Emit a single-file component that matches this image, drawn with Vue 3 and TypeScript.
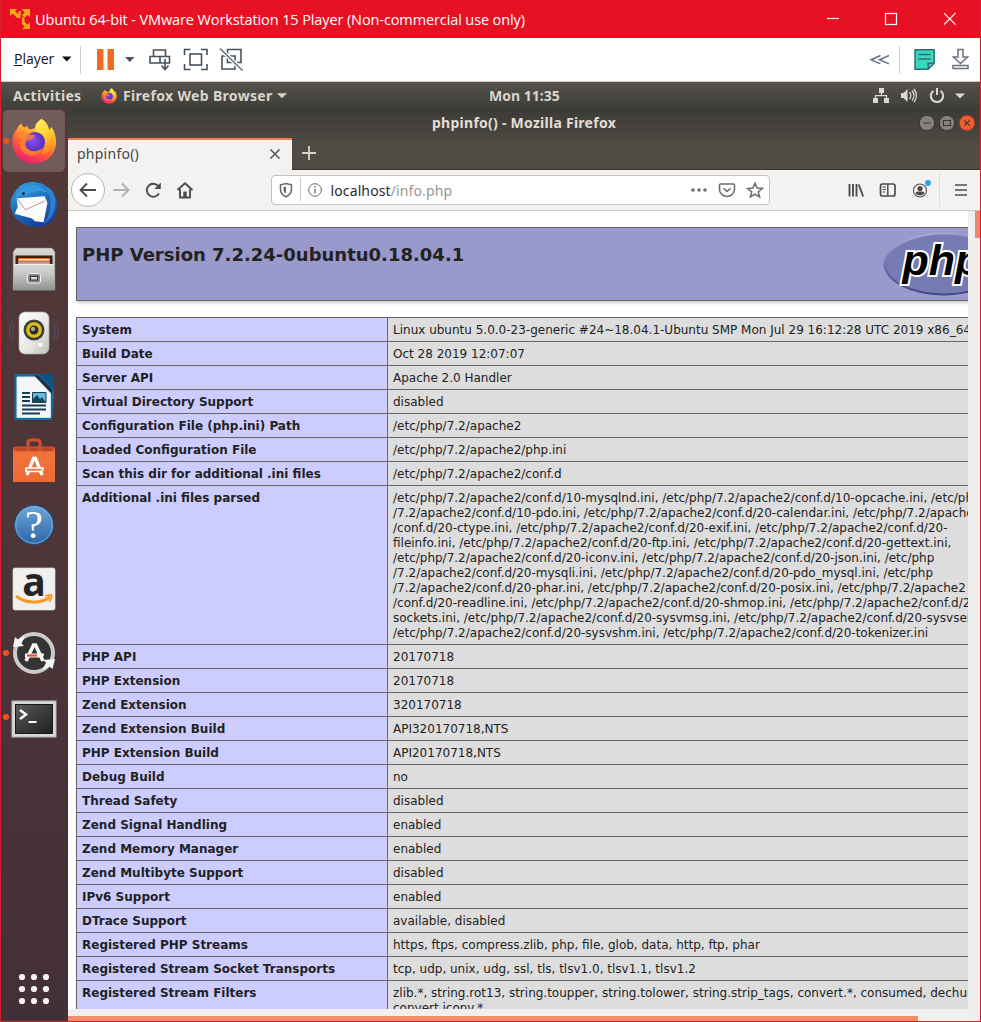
<script setup lang="ts">
interface InfoRow {
  label: string
  lines: string[]
}

const row = (label: string, ...lines: string[]): InfoRow => ({ label, lines })

const rows: InfoRow[] = [
  row('System', 'Linux ubuntu 5.0.0-23-generic #24~18.04.1-Ubuntu SMP Mon Jul 29 16:12:28 UTC 2019 x86_64'),
  row('Build Date', 'Oct 28 2019 12:07:07'),
  row('Server API', 'Apache 2.0 Handler'),
  row('Virtual Directory Support', 'disabled'),
  row('Configuration File (php.ini) Path', '/etc/php/7.2/apache2'),
  row('Loaded Configuration File', '/etc/php/7.2/apache2/php.ini'),
  row('Scan this dir for additional .ini files', '/etc/php/7.2/apache2/conf.d'),
  row(
    'Additional .ini files parsed',
    '/etc/php/7.2/apache2/conf.d/10-mysqlnd.ini, /etc/php/7.2/apache2/conf.d/10-opcache.ini, /etc/php',
    '/7.2/apache2/conf.d/10-pdo.ini, /etc/php/7.2/apache2/conf.d/20-calendar.ini, /etc/php/7.2/apache2',
    '/conf.d/20-ctype.ini, /etc/php/7.2/apache2/conf.d/20-exif.ini, /etc/php/7.2/apache2/conf.d/20-',
    'fileinfo.ini, /etc/php/7.2/apache2/conf.d/20-ftp.ini, /etc/php/7.2/apache2/conf.d/20-gettext.ini,',
    '/etc/php/7.2/apache2/conf.d/20-iconv.ini, /etc/php/7.2/apache2/conf.d/20-json.ini, /etc/php',
    '/7.2/apache2/conf.d/20-mysqli.ini, /etc/php/7.2/apache2/conf.d/20-pdo_mysql.ini, /etc/php',
    '/7.2/apache2/conf.d/20-phar.ini, /etc/php/7.2/apache2/conf.d/20-posix.ini, /etc/php/7.2/apache2',
    '/conf.d/20-readline.ini, /etc/php/7.2/apache2/conf.d/20-shmop.ini, /etc/php/7.2/apache2/conf.d/20-',
    'sockets.ini, /etc/php/7.2/apache2/conf.d/20-sysvmsg.ini, /etc/php/7.2/apache2/conf.d/20-sysvsem.ini,',
    '/etc/php/7.2/apache2/conf.d/20-sysvshm.ini, /etc/php/7.2/apache2/conf.d/20-tokenizer.ini'
  ),
  row('PHP API', '20170718'),
  row('PHP Extension', '20170718'),
  row('Zend Extension', '320170718'),
  row('Zend Extension Build', 'API320170718,NTS'),
  row('PHP Extension Build', 'API20170718,NTS'),
  row('Debug Build', 'no'),
  row('Thread Safety', 'disabled'),
  row('Zend Signal Handling', 'enabled'),
  row('Zend Memory Manager', 'enabled'),
  row('Zend Multibyte Support', 'disabled'),
  row('IPv6 Support', 'enabled'),
  row('DTrace Support', 'available, disabled'),
  row('Registered PHP Streams', 'https, ftps, compress.zlib, php, file, glob, data, http, ftp, phar'),
  row('Registered Stream Socket Transports', 'tcp, udp, unix, udg, ssl, tls, tlsv1.0, tlsv1.1, tlsv1.2'),
  row(
    'Registered Stream Filters',
    'zlib.*, string.rot13, string.toupper, string.tolower, string.strip_tags, convert.*, consumed, dechunk,',
    'convert.iconv.*'
  )
]

const gridDots = [22, 34, 46]
</script>

<template>
  <div class="vm">
    <svg class="defs" width="0" height="0">
      <defs>
        <linearGradient id="ffBody" x1="0.75" y1="0" x2="0.3" y2="1">
          <stop offset="0" stop-color="#fff04a" />
          <stop offset="0.35" stop-color="#ffb02a" />
          <stop offset="0.65" stop-color="#ff5a38" />
          <stop offset="1" stop-color="#e81c78" />
        </linearGradient>
        <linearGradient id="ffTail" x1="0" y1="0" x2="0.4" y2="1">
          <stop offset="0" stop-color="#fff36a" />
          <stop offset="0.6" stop-color="#ffd02e" />
          <stop offset="1" stop-color="#ff8a2c" />
        </linearGradient>
        <radialGradient id="ffGlobe" cx="0.4" cy="0.4" r="0.7">
          <stop offset="0" stop-color="#8a50f0" />
          <stop offset="1" stop-color="#4c2bb0" />
        </radialGradient>
        <symbol id="firefox" viewBox="0 0 48 48">
          <path d="M6 12 C7 9 9 7 11 5.500 C11.200 8 12.500 9 14 10 L17 8 C17.200 10 18 11.500 20 12 C22 11 26 10 29 10.500 C29 5 32 2 31.500 .8 C37 4 39 9 40 13 L42.500 9.500 C45 14 47 19 47 25 C47 38 37 47.500 24 47.500 C11 47.500 1.500 38 1.500 25 C1.500 20 3 15 6 12 Z" fill="url(#ffBody)" />
          <path d="M31.500 .8 C37 4 39 9 40 13 L41.500 10.500 C45 16 46 22 44 28 C42 35 36 38 31 37 C38 32 36 24 31 19 C27 15 24 12 25.500 8 C27 4 30 3 31.500 .8 Z" fill="url(#ffTail)" />
          <circle cx="25" cy="25" r="10.500" fill="url(#ffGlobe)" />
          <path d="M6 17 C10 13 16 13 19 17 L25 18 C25 21 21 23 18 23.500 C15 25 14 28 16 31 C19 35 26 36 32 32 C30 40 18 42 12 35 C8 30 9 25 12 22 C9 21 7 20 6 17 Z" fill="#ff8a2d" opacity="0.75" />
        </symbol>
        <linearGradient id="tbBlue" x1="0.2" y1="0" x2="0.7" y2="1">
          <stop offset="0" stop-color="#2f9fe0" />
          <stop offset="0.5" stop-color="#1d6cc0" />
          <stop offset="1" stop-color="#173b95" />
        </linearGradient>
        <linearGradient id="cabinet" x1="0" y1="0" x2="0" y2="1">
          <stop offset="0" stop-color="#d8d8d6" />
          <stop offset="0.4" stop-color="#c4c4c2" />
          <stop offset="1" stop-color="#8f8f8d" />
        </linearGradient>
        <linearGradient id="speaker" x1="0" y1="0" x2="1" y2="1">
          <stop offset="0" stop-color="#ffffff" />
          <stop offset="0.6" stop-color="#e6e6e4" />
          <stop offset="1" stop-color="#bdbdbb" />
        </linearGradient>
        <linearGradient id="bag" x1="0" y1="0" x2="0" y2="1">
          <stop offset="0" stop-color="#e0592d" />
          <stop offset="0.2" stop-color="#f0743c" />
          <stop offset="1" stop-color="#ec6a35" />
        </linearGradient>
        <linearGradient id="help" x1="0" y1="0" x2="0" y2="1">
          <stop offset="0" stop-color="#6fa6d8" />
          <stop offset="1" stop-color="#2a66a8" />
        </linearGradient>
        <linearGradient id="term" x1="0" y1="0" x2="1" y2="1">
          <stop offset="0" stop-color="#5b5d5a" />
          <stop offset="0.5" stop-color="#3a3c3a" />
          <stop offset="1" stop-color="#20201f" />
        </linearGradient>
        <linearGradient id="phpRim" x1="0" y1="0" x2="0.3" y2="1">
          <stop offset="0" stop-color="#b9bce4" />
          <stop offset="0.5" stop-color="#6a6fae" />
          <stop offset="1" stop-color="#40458a" />
        </linearGradient>
      </defs>
    </svg>

    <header class="titlebar">
      <svg class="vm-logo" width="22" height="22" viewBox="0 0 22 22" fill="#f9a51a">
        <path d="M1 1h7L6 3.200l3.500 3.300h2V10H8.200L3.500 5.500 1 8z" />
        <path d="M12.500 1H21v8.500l-2.500-2.700-3 3L13 7.300l2.800-2.800z" />
        <path d="M9.500 3h2.300v4H9.500zM13 9.500h2.500v4.200l3 3L21 14v7h-8l2.700-2.300-2.700-2.700z" />
      </svg>
      <span class="window-name">Ubuntu 64-bit - VMware Workstation 15 Player (Non-commercial use only)</span>
      <svg class="window-buttons" width="140" height="38" viewBox="0 0 140 38" fill="none" stroke="#fff" stroke-width="1.200">
        <path d="M5 18.500h12" />
        <rect x="63.500" y="13.500" width="11" height="11" />
        <path d="M122 13.200l11.500 11.500M133.500 13.200L122 24.700" />
      </svg>
    </header>

    <div class="toolbar">
      <span class="player"><u>P</u>layer</span>
      <svg class="tool-left" width="182" height="43" viewBox="0 0 182 43" fill="none" stroke="#46525e" stroke-width="1.600">
        <path d="M0 18.500h9.500L4.800 23.500z" fill="#111" stroke="none" />
        <path d="M18.500 8v28" stroke="#cfcfcf" stroke-width="1" />
        <path d="M35 11h6.500v21H35zM45.500 11H52v21h-6.500z" fill="#f26a21" stroke="none" />
        <path d="M63 19h9.500l-4.700 5z" fill="#46525e" stroke="none" />
        <path d="M91.500 12h12v6.500h-12zM88 18.500h10V25H88zM98 18.500h9.500V25H98zM103 21v10M99.500 27.500l3.500 4 3.500-4" />
        <path d="M122.500 17v-5.500h6M139 11.500h6V17M145 26v5.500h-6M128.500 31.500h-6V26" />
        <rect x="128" y="16" width="11.500" height="11" />
        <path d="M165.500 24.500V11.500H179V24.500zM160 18h5.500M160 17.500v13.500h13v-6.500M165.500 18h7.500v7" />
        <path d="M158 10.500l22.500 22" stroke="#fff" stroke-width="4" />
        <path d="M158 10.500l22.500 22" stroke="#69737c" />
      </svg>
      <svg class="tool-right" width="106" height="43" viewBox="0 0 106 43" fill="none" stroke="#67727e" stroke-width="1.500">
        <path d="M10.500 17.500L1 21.700l9.500 4.200M19 17.500L9.500 21.700l9.500 4.200M1 21.700h3M9 21.700h3" />
        <path d="M29.500 8v27.500" stroke="#cfcfcf" stroke-width="1" />
        <path d="M45 11.800h19.200v13.500l-6 6H45z" fill="#3ad6bd" stroke="#326d74" />
        <path d="M58.200 31.300v-6h6M48.500 16.500h12M48.500 21h12" stroke="#326d74" />
        <path d="M88 11.500h5v7.500h4.500l-7 6.500-7-6.500H88zM83 27.500h15v3H83z" />
      </svg>
    </div>

    <div class="desktop">
      <div class="topbar">
        <span class="activities">Activities</span>
        <svg class="topbar-ff" width="16" height="16"><use href="#firefox" /></svg>
        <span class="app-menu">Firefox Web Browser</span>
        <svg class="arrow" width="10" height="6" viewBox="0 0 10 6"><path d="M0 .3h10L5 5.300z" fill="#d5d2cc" /></svg>
        <span class="clock">Mon 11:35</span>
        <svg class="status" width="94" height="20" viewBox="0 0 94 20" fill="none" stroke="#dcd9d4" stroke-width="1.300">
          <path d="M7 2h5v5H7zM1 12h5v5H1zM12 12h5v5h-5z" fill="#dcd9d4" stroke="none" />
          <path d="M9.500 6v4M3.500 13V9.700h11V13" stroke-width="1.200" />
          <path d="M29 7h2.500l4-4v13l-4-4H29z" fill="#dcd9d4" stroke="none" />
          <path d="M37.500 6c1.500 2 1.500 5 0 7M40 4.500c2.500 3 2.500 7 0 10M42 3c3 4 3 9 0 13" />
          <path d="M61.500 4.800a6.200 6.200 0 1 0 7 0M65 2v7" stroke-width="2" />
          <path d="M83 7.500h10l-5 5z" fill="#dcd9d4" stroke="none" />
        </svg>
      </div>

      <div class="workspace">
        <nav class="dock">
          <div class="launcher running active">
            <svg width="46" height="46"><use href="#firefox" /></svg>
          </div>
          <div class="launcher">
            <svg width="50" height="50" viewBox="0 0 52 52">
              <path d="M4 16C8 8 13 4 18 3C34 -1 49 10 50 25C51 37 44 48 32 49C20 50 6 44 3 32C1 26 1 21 4 16Z" fill="url(#tbBlue)" />
              <path d="M11 12C17 3 32 3 40 13C32 10 24 11 18 16C14 14 10 16 6 20C7 16 8 14 11 12Z" fill="#3598dc" />
              <path d="M36 7C45 15 46 32 36 46C48 39 53 20 43 9Z" fill="#3794dc" opacity="0.6" />
              <path d="M8 19L37 17L40 24L36 44L27 43L24 40L6 35L9 28Z" fill="#fbfbfb" />
              <path d="M8 18.500L17 31L37 22" fill="none" stroke="#999" stroke-width="1" />
              <circle cx="15" cy="14" r="1.300" fill="#111" />
            </svg>
          </div>
          <div class="launcher">
            <svg width="48" height="48" viewBox="0 0 48 48">
              <path d="M6 3h36l3 4v37H3V7z" fill="url(#cabinet)" stroke="#777" stroke-width=".5" />
              <path d="M5.500 10.500h37V20h-37z" fill="#35201a" />
              <path d="M8 13h32v7H8z" fill="#e86b26" />
              <path d="M9 14.800h30" stroke="#ffe6bd" stroke-width="1.500" />
              <path d="M8 17.300h32v3H8z" fill="#c4ab8d" />
              <path d="M4 19.500h40l1 26H3z" fill="url(#cabinet)" />
              <path d="M4 19.500h40" stroke="#eee" />
              <rect x="17.500" y="28.500" width="13" height="9.500" rx="2" fill="#858583" stroke="#f3f3f1" />
              <rect x="20.500" y="31.500" width="7" height="3.500" fill="#ddd" stroke="#333" />
            </svg>
          </div>
          <div class="launcher">
            <svg width="48" height="48" viewBox="0 0 48 48">
              <path d="M5 13c-3 6-3 12 0 18M43 13c3 6 3 12 0 18M2 12c-3 6-3 14 0 20M46 12c3 6 3 14 0 20" fill="none" stroke="#50669a" stroke-width="1.500" opacity=".4" />
              <rect x="9" y="3" width="30" height="42" rx="6" fill="url(#speaker)" stroke="#aaa" stroke-width=".7" />
              <circle cx="24" cy="21" r="10.500" fill="#42494b" />
              <circle cx="24" cy="21" r="8.500" fill="#d6bd25" stroke="#26201a" />
              <circle cx="24" cy="21" r="4.500" fill="#2d2b23" />
              <circle cx="23" cy="20" r="2.200" fill="#a9a58e" />
              <rect x="27" y="33" width="6" height="5.500" rx="1.500" fill="#f5f5ee" stroke="#b7b7a7" stroke-width=".6" />
            </svg>
          </div>
          <div class="launcher">
            <svg width="48" height="48" viewBox="0 0 48 48">
              <path d="M4.500 1H44v23l-2 23H4.500z" fill="#116ca6" />
              <path d="M29 1h15v16z" fill="#0d527f" />
              <path d="M7 4h18l15.500 16v24.500H7z" fill="#f5f6f7" stroke="#d6e3ec" />
              <path d="M24 2l18 19v-5L28 2z" fill="#262f38" />
              <path d="M12 20h8M12 24h8M12 28h8M12 32.500h24M12 36.500h24M12 40.500h18" stroke="#183d57" stroke-width="1.800" />
              <path d="M22.500 19.500h13.500v10H22.500z" fill="#69b9df" stroke="#183d57" />
              <path d="M23 29v-3l4-4 3 4 2-2 3.500 5z" fill="#16465b" />
            </svg>
          </div>
          <div class="launcher">
            <svg width="48" height="48" viewBox="0 0 48 48">
              <path d="M3 10h42v35H3z" fill="url(#bag)" />
              <path d="M3 10h42l-2 4H5z" fill="#bd4725" />
              <path d="M5 14V10h38v4" fill="none" stroke="#d65630" />
              <path d="M18 14V6q0-3 3-3h6q3 0 3 3v8" fill="none" stroke="#d34f2e" stroke-width="3" />
              <path d="M17 38l6.500-16.500h2L32 38" fill="none" stroke="#fff" stroke-width="3.400" />
              <path d="M16 31h17q0 3.500-2.500 3.500H16z" fill="#ef7b48" stroke="#fff" stroke-width="1.700" />
            </svg>
          </div>
          <div class="launcher">
            <svg width="48" height="48" viewBox="0 0 48 48">
              <circle cx="24" cy="24" r="19.500" fill="url(#help)" stroke="#214f80" />
              <circle cx="24" cy="24" r="18.300" fill="none" stroke="#88b6de" stroke-width=".8" />
              <text x="24" y="37" text-anchor="middle" class="help-mark">?</text>
            </svg>
          </div>
          <div class="launcher">
            <svg width="48" height="48" viewBox="0 0 48 48">
              <rect x="3" y="3" width="42" height="42" rx="2" fill="#f0f0f0" stroke="#ddd" stroke-width=".7" />
              <text x="24" y="30.500" text-anchor="middle" class="amazon-mark">a</text>
              <path d="M6 31c10 8 25 8 34 1" fill="none" stroke="#f79a1e" stroke-width="3" />
              <path d="M35 31q7-2 7 0t-3 6" fill="none" stroke="#f79a1e" stroke-width="1.800" />
            </svg>
          </div>
          <div class="launcher running">
            <svg width="48" height="48" viewBox="0 0 48 48">
              <circle cx="24" cy="24" r="19" fill="#333433" stroke="#cbcbc9" stroke-width="4" />
              <path d="M3 18L5 8l3 2.500 7-3.500-3.500 7.500L14 17z" fill="#f4f4f4" />
              <path d="M45 30l-2.500 10-3-2.500-7 3.500 3.500-7.500L33 31z" fill="#f4f4f4" />
              <path d="M16 32l7.500-16h2L33 32" fill="none" stroke="#f5f5f3" stroke-width="3.600" />
              <path d="M15 24.500h19q0 4-3 4H15z" fill="#f5f5f3" />
              <path d="M17 26.500h10" stroke="#e6542b" stroke-width="2.200" />
            </svg>
          </div>
          <div class="launcher running terminal">
            <svg width="48" height="48" viewBox="0 0 48 48">
              <rect x="2" y="6" width="44" height="36" fill="#d7d8d5" stroke="#b6b6b3" />
              <rect x="5.500" y="9.500" width="37" height="29" fill="url(#term)" stroke="#191919" />
              <path d="M10 15l6 4.500-6 4.500" fill="none" stroke="#fff" stroke-width="2.500" />
              <path d="M18.500 27h8" stroke="#fff" stroke-width="2" />
            </svg>
          </div>
          <svg class="show-apps" width="67" height="66" viewBox="1 956 67 66" fill="#f7f3f2">
            <template v-for="cx in gridDots" :key="cx">
              <circle v-for="cy in gridDots" :key="cy" :cx="cx" :cy="cy + 956" r="3.100" />
            </template>
          </svg>
        </nav>

        <section class="browser">
          <div class="browser-head">
            <span class="page-title">phpinfo() - Mozilla Firefox</span>
            <svg class="head-buttons" width="60" height="20" viewBox="0 0 60 20">
              <circle cx="10" cy="10" r="7.700" fill="#85827b" stroke="#34332e" />
              <circle cx="30" cy="10" r="7.700" fill="#85827b" stroke="#34332e" />
              <circle cx="50" cy="10" r="7.800" fill="#ee5e30" stroke="#8f3b22" />
              <path d="M6.500 10h7M26.500 7.500h7v5h-7zM47.300 7.300l5.400 5.400M52.700 7.300l-5.400 5.400" fill="none" stroke="#3a332d" stroke-width="1.100" />
            </svg>
            <div class="tab">
              <span>phpinfo()</span>
              <svg width="12" height="12" viewBox="0 0 12 12" fill="none" stroke="#555" stroke-width="1.600"><path d="M1.500 1.500l9 9M10.500 1.500l-9 9" /></svg>
            </div>
            <svg class="new-tab" width="14" height="14" viewBox="0 0 14 14" fill="none" stroke="#d7d3ca" stroke-width="1.800"><path d="M7 0v14M0 7h14" /></svg>
          </div>

          <div class="navbar">
            <svg class="nav-icons" width="130" height="40" viewBox="0 0 130 40" fill="none" stroke="#4c4c4c" stroke-width="1.900">
              <circle cx="20" cy="20" r="16.500" fill="#fff" stroke="#b8b5b2" stroke-width="1" />
              <path d="M28 20H13M19 13.500L12.500 20l6.500 6.500" />
              <path d="M45.500 20H60M54 13.500l6.500 6.500-6.500 6.500" stroke="#b4b2b0" />
              <path d="M91 23.500a6.500 6.500 0 1 1-.8-7.500" />
              <path d="M92.800 12.500v6.500h-6.500z" fill="#4c4c4c" stroke="none" />
              <path d="M109.500 20l7.500-6.800 7.500 6.800M112 19v8.500h10V19" stroke-linejoin="round" />
              <path d="M115.300 21.500h3.400V27h-3.400z" fill="#4c4c4c" stroke="none" />
            </svg>
            <div class="urlbar">
              <svg width="56" height="28" viewBox="0 0 56 28" fill="none" stroke="#686868" stroke-width="1.500">
                <path d="M14 7.500l5.500 1.300v4.500c0 4-2.500 6.200-5.500 7.500-3-1.300-5.500-3.500-5.500-7.500V8.800z" />
                <path d="M14 10.500v7c-1.800-1-2.500-2.500-2.500-4.500v-1.800z" fill="#686868" stroke="none" />
                <path d="M28.500 2v23" stroke="#c8c8c8" stroke-width="1" />
                <circle cx="43" cy="14" r="6.300" stroke-width="1" />
                <path d="M43 13v4.500M43 10v1.500" stroke-width="1.300" />
              </svg>
              <span class="host">localhost</span><span class="path">/info.php</span>
              <svg class="url-actions" width="76" height="28" viewBox="0 0 76 28" fill="none" stroke="#6f6f6f" stroke-width="1.600">
                <g fill="#6f6f6f" stroke="none"><circle cx="3" cy="14" r="1.800" /><circle cx="9" cy="14" r="1.800" /><circle cx="15" cy="14" r="1.800" /></g>
                <path d="M30.500 8h13q1 0 1 1v4.500a7 6.500 0 0 1-15 0V9q0-1 1-1zM33.500 12.300l3.500 3.200 3.500-3.200" />
                <path d="M65 7.200l2.100 4.800 5.200.5-4 3.400 1.200 5-4.500-2.700-4.500 2.700 1.200-5-4-3.400 5.200-.5z" />
              </svg>
            </div>
            <svg class="nav-tools" width="132" height="40" viewBox="0 0 132 40" fill="none" stroke="#4d4d4d" stroke-width="1.700">
              <path d="M8.500 14v12.500M12 14v12.500M15.500 14v12.500M17.700 14.500l4.500 12" stroke-width="1.900" />
              <rect x="39.500" y="14" width="14.500" height="12" rx="2" />
              <path d="M46.800 14v12" stroke-width="1.500" /><path d="M41.500 17h3.500M41.500 19.500h3.500M41.500 22h2.500" stroke-width="1" />
              <circle cx="79" cy="20.500" r="6.500" stroke-width="1.100" />
              <circle cx="79" cy="18.500" r="2.600" fill="#4d4d4d" stroke="none" />
              <path d="M74.500 23.500q0-2 2.500-2h4q2.500 0 2.500 2q-4.500 4-9 0z" fill="#4d4d4d" stroke="none" />
              <circle cx="87" cy="13" r="3" fill="#20a5ef" stroke="none" />
              <path d="M98.500 4v33" stroke="#dedbd8" stroke-width="1" />
              <path d="M114 15h12M114 20h12M114 25h12" />
            </svg>
          </div>

          <div class="viewport">
            <main class="page">
              <div class="banner">
                <h1>PHP Version 7.2.24-0ubuntu0.18.04.1</h1>
                <svg class="php-logo" width="121" height="66" viewBox="0 0 121 66">
                  <ellipse cx="60.500" cy="32" rx="60" ry="31.500" fill="url(#phpRim)" />
                  <ellipse cx="61" cy="32" rx="58" ry="29.500" fill="#777bb3" />
                  <text x="19.500" y="43" class="php-word">php</text>
                </svg>
              </div>
              <table>
                <colgroup><col class="key" /><col class="val" /></colgroup>
                <tbody>
                  <tr v-for="item in rows" :key="item.label">
                    <th>{{ item.label }}</th>
                    <td><div v-for="line in item.lines" :key="line">{{ line }}</div></td>
                  </tr>
                </tbody>
              </table>
            </main>
            <div class="v-scroll"><div class="v-thumb"></div></div>
          </div>
          <div class="h-scroll"><div class="h-thumb"></div></div>
        </section>
      </div>
    </div>
  </div>
</template>

<style>
html, body { margin: 0; overflow: hidden; }
</style>

<style scoped>
.vm {
  box-sizing: border-box;
  width: 981px;
  height: 1022px;
  overflow: hidden;
  display: flex;
  flex-direction: column;
  border: solid #d5202e;
  border-width: 0 1px 1px;
  background: #fff;
  font-family: "Noto Sans", "Open Sans", sans-serif;
  white-space: nowrap;
}
.defs { position: absolute; }
svg { display: block; flex: none; overflow: visible; }

.titlebar {
  height: 38px;
  flex: none;
  display: flex;
  align-items: center;
  background: #e81123;
  margin: 0 -1px;
  padding-left: 9px;
  color: #fff;
}
.vm-logo { margin-right: 4px; }
.window-name { font-family: "Open Sans", sans-serif; font-size: 14.500px; line-height: 20px; letter-spacing: -0.110px; padding-top: 2px; }
.window-buttons { margin-left: auto; margin-right: 19px; }

.toolbar { height: 43px; flex: none; display: flex; align-items: center; border-bottom: 1px solid #c9c9c9; color: #111; }
.player { box-sizing: border-box; width: 61px; padding-left: 13px; padding-bottom: 2px; font-family: "Open Sans", sans-serif; font-size: 14px; }
.tool-right { margin-left: auto; margin-right: 4px; }

.desktop { flex: 1; min-height: 0; display: flex; flex-direction: column; }
.topbar {
  height: 27px;
  flex: none;
  display: flex;
  align-items: center;
  box-sizing: border-box;
  padding-left: 12px;
  background: linear-gradient(#55524b, #3e3d38);
  color: #d8d5cf;
  font-size: 14px;
  font-weight: 700;
}
.activities { width: 88px; letter-spacing: 0.350px; }
.topbar-ff { margin-right: 6px; }
.app-menu { width: 149px; letter-spacing: 0.330px; }
.arrow { margin-left: 5px; }
.clock { margin-left: 202px; }
.status { margin-left: auto; margin-right: 14px; }

.workspace { flex: 1; min-height: 0; display: flex; }
.dock {
  width: 67px;
  flex: none;
  display: flex;
  flex-direction: column;
  background: linear-gradient(#533837, #4c3539 55%, #432f37);
}
.launcher { position: relative; height: 64px; flex: none; display: flex; align-items: center; justify-content: center; box-sizing: border-box; padding-right: 1px; }
.launcher.active::before {
  content: "";
  position: absolute;
  inset: 1px 3px 1px 2px;
  border-radius: 5px;
  background: #725b5b;
}
.launcher > svg { position: relative; }
.running::after {
  content: "";
  position: absolute;
  left: 2px;
  top: 29px;
  width: 6px;
  height: 6px;
  border-radius: 50%;
  background: #e95420;
}
.terminal { padding-top: 3px; }
.show-apps { margin-top: auto; }

.browser { flex: 1; min-width: 0; display: flex; flex-direction: column; }
.browser-head {
  height: 61px;
  flex: none;
  box-sizing: border-box;
  display: grid;
  grid-template-columns: 224px 1fr 63px;
  grid-template-rows: 29px 32px;
  background: linear-gradient(#3c3b37, #504c45 65%);
  border-bottom: 1px solid #35332e;
}
.page-title {
  grid-column: 1 / 4;
  grid-row: 1;
  text-align: center;
  color: #e2ded6;
  font-size: 14px;
  font-weight: 700;
  line-height: 28px;
  letter-spacing: 0.260px;
}
.head-buttons { grid-column: 3; grid-row: 1; margin-top: 4px; }
.tab {
  grid-column: 1;
  grid-row: 2;
  box-sizing: border-box;
  height: 32px;
  display: flex;
  align-items: center;
  justify-content: space-between;
  padding: 0 11px 3px 9px;
  border-top: 2px solid #ee814f;
  background: #f4f2f1;
  color: #464646;
  font-size: 14px;
  letter-spacing: 0.250px;
}
.new-tab { grid-column: 2; grid-row: 2; margin: 8px 0 0 10px; }
.navbar { height: 41px; flex: none; box-sizing: border-box; display: flex; align-items: center; background: #f4f2f1; border-bottom: 1px solid #cac7c4; }
.urlbar {
  width: 499px;
  height: 30px;
  margin-left: 73px;
  box-sizing: border-box;
  display: flex;
  align-items: center;
  border: 1px solid #c4c1be;
  border-radius: 4px;
  background: #fff;
  font-size: 14px;
  letter-spacing: 0.120px;
}
.host { margin-left: 2.500px; color: #2c2c2c; }
.path { color: #969696; }
.url-actions { margin-left: auto; margin-right: 3px; }
.nav-tools { margin-left: auto; margin-right: 7px; }

.viewport { flex: 1; min-height: 0; display: flex; background: #fff; }
.page { flex: 1; min-width: 0; overflow: hidden; padding: 16px 0 0 8px; color: #222; font-family: "DejaVu Sans", sans-serif; }
.banner, table { width: 934px; box-shadow: 1px 2px 3px #ccc; }
.banner {
  position: relative;
  height: 74px;
  box-sizing: border-box;
  border: 1px solid #666;
  background: #9999cc;
  margin-bottom: 16px;
}
h1 { margin: 0; padding: 16px 5px 0; font-size: 18px; line-height: 21px; font-weight: bold; }
.php-logo { position: absolute; right: 5px; top: 4px; }
.php-word {
  font: italic bold 43px "Liberation Sans", sans-serif;
  fill: #000;
  stroke: #fff;
  stroke-width: 4px;
  paint-order: stroke;
}
table { border-collapse: collapse; table-layout: fixed; font-size: 12px; line-height: 15px; }
.key { width: 311px; }
th, td { padding: 5px 5px 3px; border: 1px solid #666; text-align: left; vertical-align: top; }
th { background: #ccccff; }
td { background: #dddddd; }
.v-scroll { width: 12px; background: #f1efee; display: flex; justify-content: flex-end; }
.v-thumb { width: 5px; height: 27px; background: #f0876a; }
.h-scroll { height: 12px; flex: none; background: #f1efee; display: flex; align-items: flex-end; }
.h-thumb { width: 850px; height: 5px; background: #f58b69; }
.help-mark { font: 40px "Liberation Serif", serif; fill: #fff; }
.amazon-mark { font: bold 39px "Open Sans", sans-serif; fill: #252525; }
</style>
